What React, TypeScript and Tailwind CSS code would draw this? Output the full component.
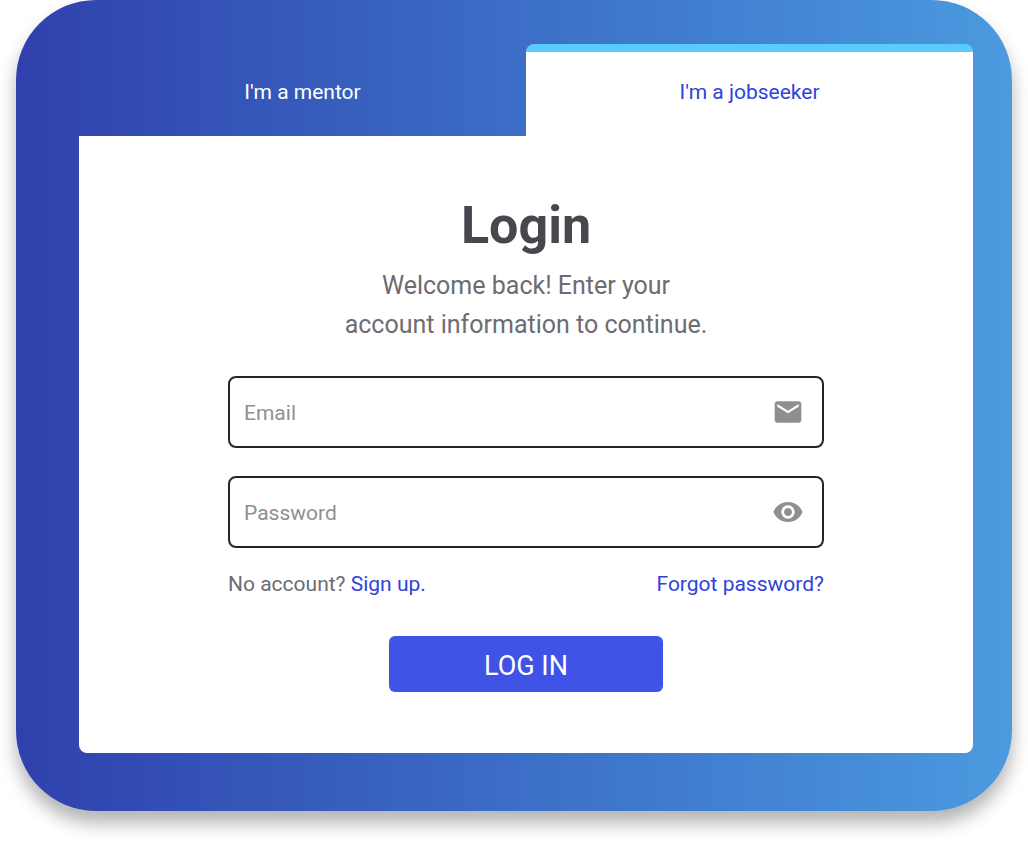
import { useState } from "react";
import { MdEmail, MdVisibility } from "react-icons/md";

const tabs = [
  { id: "mentor", label: "I'm a mentor" },
  { id: "jobseeker", label: "I'm a jobseeker" },
];

export default function App() {
  const [activeTab, setActiveTab] = useState("jobseeker");
  const [showPassword, setShowPassword] = useState(false);

  return (
    <main className="px-4 pb-8 font-[Roboto,sans-serif]">
      <div className="rounded-[80px] bg-linear-to-r from-[#3040ad] to-[#4b9adf] pt-11 pr-[39px] pb-[58px] pl-[63px] shadow-[0_12px_18px_rgba(0,0,0,0.3)]">
        <div role="tablist" className="grid grid-cols-2">
          {tabs.map((tab) => (
            <button
              key={tab.id}
              type="button"
              role="tab"
              aria-selected={activeTab === tab.id}
              onClick={() => setActiveTab(tab.id)}
              className={`h-[92px] overflow-hidden rounded-t-lg border-t-8 pb-0.5 text-[21px] ${
                activeTab === tab.id
                  ? "border-[#58cbff] bg-white text-[#2f43dc]"
                  : "border-transparent text-white"
              }`}
            >
              {tab.label}
            </button>
          ))}
        </div>

        <section className="rounded-b-lg bg-white pt-[58px] pb-[61px]">
          <form className="mx-auto w-2/3" onSubmit={(e) => e.preventDefault()}>
            <h1 className="text-center text-[52px] leading-[64px] font-bold text-[#48474e]">Login</h1>
            <p className="mt-2 text-center text-[25px] leading-[39px] text-[#6c6c72]">
              Welcome back! Enter your
              <br />
              account information to continue.
            </p>

            <div className="mt-8 flex h-[72px] items-center rounded-lg border-2 border-[#252527] pr-[18px] pl-[14px]">
              <input
                type="email"
                aria-label="Email"
                placeholder="Email"
                className="min-w-0 flex-1 pt-1 text-[21px] outline-none placeholder:text-[#8f8f8f]"
              />
              <MdEmail className="size-8 text-[#8f8f8f]" />
            </div>

            <div className="mt-7 flex h-[72px] items-center rounded-lg border-2 border-[#252527] pr-[18px] pl-[14px]">
              <input
                type={showPassword ? "text" : "password"}
                aria-label="Password"
                placeholder="Password"
                className="min-w-0 flex-1 pt-1 text-[21px] outline-none placeholder:text-[#8f8f8f]"
              />
              <button type="button" aria-label="Show password" onClick={() => setShowPassword(!showPassword)}>
                <MdVisibility className="size-8 text-[#8f8f8f]" />
              </button>
            </div>

            <div className="mt-5 flex justify-between text-[21px] leading-8">
              <p className="text-[#6c6c72]">
                No account?{" "}
                <a href="#signup" className="text-[#2f43dc]">
                  Sign up.
                </a>
              </p>
              <a href="#forgot" className="text-[#2f43dc]">
                Forgot password?
              </a>
            </div>

            <button
              type="submit"
              className="mx-auto mt-9 block h-14 w-[274px] rounded-md bg-[#3f54e6] pt-1 text-[27px] text-white"
            >
              LOG IN
            </button>
          </form>
        </section>
      </div>
    </main>
  );
}
